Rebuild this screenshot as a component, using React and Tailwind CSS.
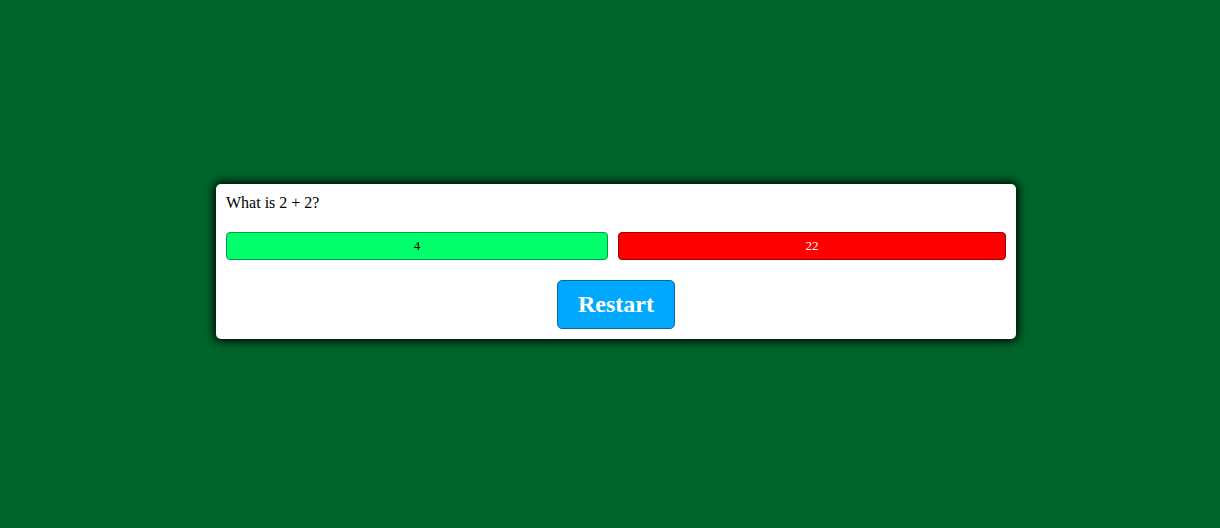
export default function App() {
  return (
    <div
      className="min-h-screen w-full bg-[#00652a] flex items-center justify-center pl-[12px] pb-[6px]"
      style={{ fontFamily: '"Liberation Serif", "Times New Roman", serif' }}
    >
      <div className="w-[800px] bg-white rounded-[5px] p-[10px] shadow-[0_0_10px_2px_#000] text-black">
        <div className="text-[16px] leading-[18px]">What is 2 + 2?</div>
        <div className="flex gap-[10px] mt-[20px]">
          <button className="flex-auto h-[28px] bg-[#00ff6a] border border-[#0a9a4a] rounded-[4px] text-[13px] text-black">
            4
          </button>
          <button className="flex-auto h-[28px] bg-[#ff0000] border border-[#a00000] rounded-[4px] text-[13px] text-white">
            22
          </button>
        </div>
        <div className="flex justify-center mt-[20px]">
          <button className="h-[49px] px-[20px] bg-[#00a8ff] border border-[#0a6aa8] rounded-[5px] text-white font-bold text-[24px] leading-[27px]">
            Restart
          </button>
        </div>
      </div>
    </div>
  );
}
